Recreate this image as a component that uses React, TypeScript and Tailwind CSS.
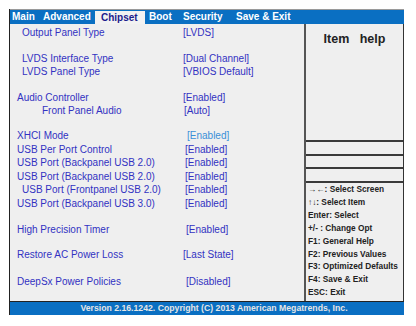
const font = { fontFamily: '"Liberation Sans", Arial, sans-serif' };

type Row = { label: string; value: string; indent?: string; vx?: string; mt?: string; h?: string; cyan?: boolean };

const rows: Row[] = [
  { label: 'Output Panel Type', value: '[LVDS]', indent: 'pl-[12px]', vx: 'pl-[0px]' },
  { label: 'LVDS Interface Type', value: '[Dual Channel]', indent: 'pl-[12px]', mt: 'mt-[13px]' },
  { label: 'LVDS Panel Type', value: '[VBIOS Default]', indent: 'pl-[12px]' },
  { label: 'Audio Controller', value: '[Enabled]', mt: 'mt-[13px]' },
  { label: 'Front Panel Audio', value: '[Auto]', indent: 'pl-[32px]', vx: 'pl-[1px]' },
  { label: 'XHCI Mode', value: '[Enabled]', mt: 'mt-[12px]', h: 'h-[13.6px]', vx: 'pl-[4px]', cyan: true },
  { label: 'USB Per Port Control', value: '[Enabled]', h: 'h-[13.6px]', vx: 'pl-[2px]' },
  { label: 'USB Port (Backpanel USB 2.0)', value: '[Enabled]', h: 'h-[13.6px]', vx: 'pl-[2px]' },
  { label: 'USB Port (Backpanel USB 2.0)', value: '[Enabled]', h: 'h-[13.6px]', vx: 'pl-[2px]' },
  { label: 'USB Port (Frontpanel USB 2.0)', value: '[Enabled]', indent: 'pl-[12px]', h: 'h-[13.6px]', vx: 'pl-[2px]' },
  { label: 'USB Port (Backpanel USB 3.0)', value: '[Enabled]', h: 'h-[13.6px]', vx: 'pl-[2px]' },
  { label: 'High Precision Timer', value: '[Enabled]', mt: 'mt-[12px]', vx: 'pl-[3px]' },
  { label: 'Restore AC Power Loss', value: '[Last State]', mt: 'mt-[12px]' },
  { label: 'DeepSx Power Policies', value: '[Disabled]', mt: 'mt-[14px]', vx: 'pl-[3px]' },
];

const keys = [
  '\u2192\u2190: Select Screen',
  '\u2191\u2193: Select Item',
  'Enter: Select',
  '+/- : Change Opt',
  'F1: General Help',
  'F2: Previous Values',
  'F3: Optimized Defaults',
  'F4: Save & Exit',
  'ESC: Exit',
];

function Tabs() {
  return (
    <div className="h-[15px] border-t border-[#9a9a9a] bg-[#0a6fc2] flex text-[10px] font-bold leading-[14px] text-white">
      <span className="w-[33px] pl-[2px]">Main</span>
      <span className="w-[52px]">Advanced</span>
      <span className="w-[50px] mt-[1px] bg-[#f2f2f2] text-[#1c1c8c] pl-[6px] leading-[13px]">Chipset</span>
      <span className="w-[38px] pl-[4px]">Boot</span>
      <span className="w-[53px]">Security</span>
      <span>Save &amp; Exit</span>
    </div>
  );
}

export default function App() {
  return (
    <div className="w-[416px] h-[326px] bg-white pt-[9px] pl-[9px]" style={font}>
      <div className="w-[395px] flex flex-col border-l border-[#222]">
        <Tabs />
        <div className="h-[277px] flex bg-[#efefef] border-r border-[#333]">
          <div className="w-[294px] flex flex-col pt-[2px] text-[10px] text-[#3232c2]">
            {rows.map((r, i) => (
              <div key={i} className={`flex ${r.h ?? 'h-[13px]'} leading-[13px] ${r.mt ?? ''}`}>
                <span className={`w-[173px] ${r.indent ?? 'pl-[7px]'}`}>{r.label}</span>
                <span className={`${r.vx ?? ''} ${r.cyan ? 'text-[#3a90d8]' : ''}`}>{r.value}</span>
              </div>
            ))}
          </div>
          <div className="w-[2px] bg-[#555]" />
          <div className="flex-1 flex flex-col">
            <div className="h-[118px] border-b-2 border-[#3a3a3a] pt-[6px] text-center text-[12.5px] font-bold text-[#222]">
              Item&nbsp;&nbsp;&nbsp;help
            </div>
            <div className="h-[14px] border-b-2 border-[#3a3a3a]" />
            <div className="h-[13px] border-b-2 border-[#3a3a3a]" />
            <div className="h-[14px] border-b-2 border-[#3a3a3a]" />
            <div className="flex flex-col pl-[2px] text-[8.3px] font-bold leading-[12.9px] text-[#222]">
              {keys.map((k) => (
                <span key={k}>{k}</span>
              ))}
            </div>
          </div>
        </div>
        <div className="h-[14px] bg-[#0a6fc2] border-t border-[#222] text-[8.7px] font-bold leading-[13px] text-[#e6e6e6] text-center pl-[14px]">
          Version 2.16.1242. Copyright (C) 2013 American Megatrends, Inc.
        </div>
      </div>
    </div>
  );
}
